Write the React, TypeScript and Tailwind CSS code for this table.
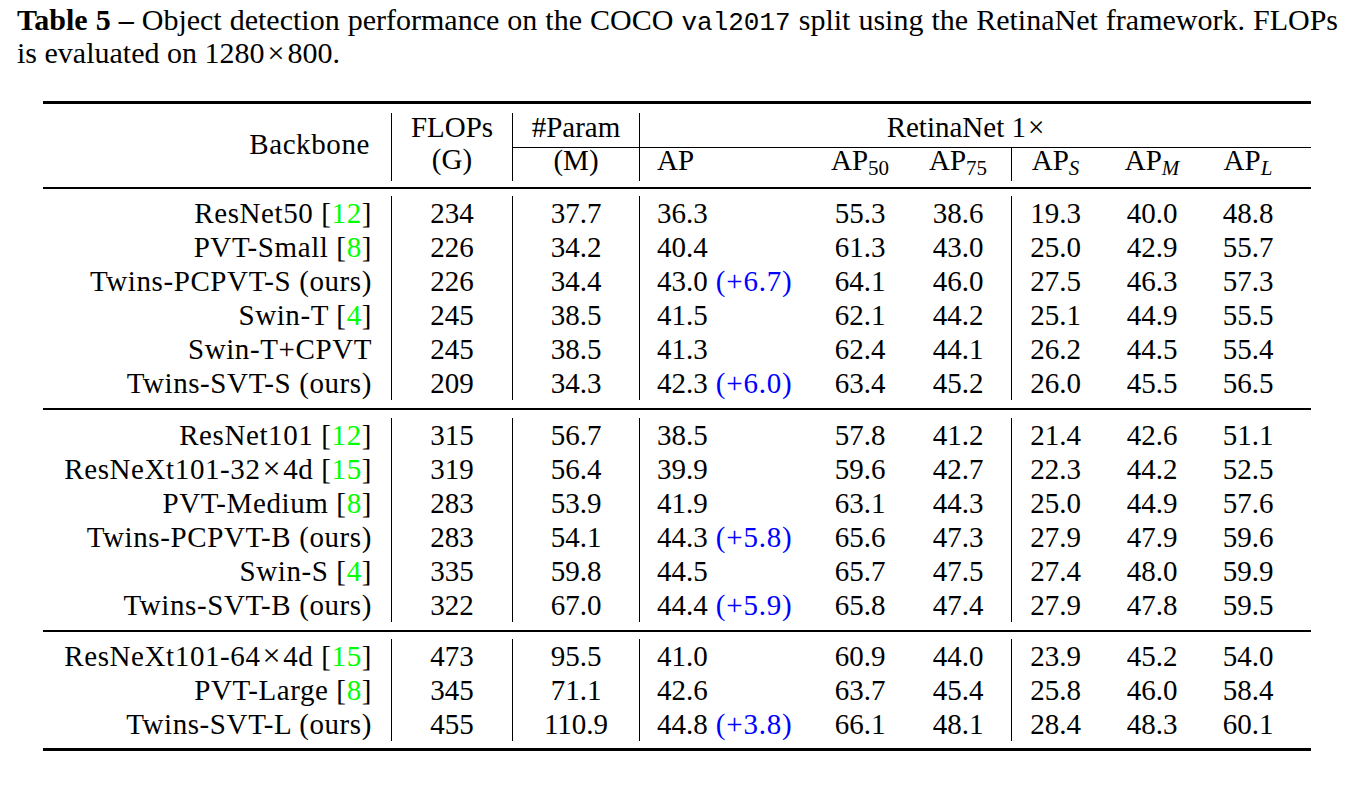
type Row = {
  name: string;
  cite?: string;
  flops: string;
  param: string;
  ap: string;
  gain?: string;
  ap50: string;
  ap75: string;
  aps: string;
  apm: string;
  apl: string;
};

const groups: Row[][] = [
  [
    { name: "ResNet50", cite: "12", flops: "234", param: "37.7", ap: "36.3", ap50: "55.3", ap75: "38.6", aps: "19.3", apm: "40.0", apl: "48.8" },
    { name: "PVT-Small", cite: "8", flops: "226", param: "34.2", ap: "40.4", ap50: "61.3", ap75: "43.0", aps: "25.0", apm: "42.9", apl: "55.7" },
    { name: "Twins-PCPVT-S (ours)", flops: "226", param: "34.4", ap: "43.0", gain: "(+6.7)", ap50: "64.1", ap75: "46.0", aps: "27.5", apm: "46.3", apl: "57.3" },
    { name: "Swin-T", cite: "4", flops: "245", param: "38.5", ap: "41.5", ap50: "62.1", ap75: "44.2", aps: "25.1", apm: "44.9", apl: "55.5" },
    { name: "Swin-T+CPVT", flops: "245", param: "38.5", ap: "41.3", ap50: "62.4", ap75: "44.1", aps: "26.2", apm: "44.5", apl: "55.4" },
    { name: "Twins-SVT-S (ours)", flops: "209", param: "34.3", ap: "42.3", gain: "(+6.0)", ap50: "63.4", ap75: "45.2", aps: "26.0", apm: "45.5", apl: "56.5" },
  ],
  [
    { name: "ResNet101", cite: "12", flops: "315", param: "56.7", ap: "38.5", ap50: "57.8", ap75: "41.2", aps: "21.4", apm: "42.6", apl: "51.1" },
    { name: "ResNeXt101-32×4d", cite: "15", flops: "319", param: "56.4", ap: "39.9", ap50: "59.6", ap75: "42.7", aps: "22.3", apm: "44.2", apl: "52.5" },
    { name: "PVT-Medium", cite: "8", flops: "283", param: "53.9", ap: "41.9", ap50: "63.1", ap75: "44.3", aps: "25.0", apm: "44.9", apl: "57.6" },
    { name: "Twins-PCPVT-B (ours)", flops: "283", param: "54.1", ap: "44.3", gain: "(+5.8)", ap50: "65.6", ap75: "47.3", aps: "27.9", apm: "47.9", apl: "59.6" },
    { name: "Swin-S", cite: "4", flops: "335", param: "59.8", ap: "44.5", ap50: "65.7", ap75: "47.5", aps: "27.4", apm: "48.0", apl: "59.9" },
    { name: "Twins-SVT-B (ours)", flops: "322", param: "67.0", ap: "44.4", gain: "(+5.9)", ap50: "65.8", ap75: "47.4", aps: "27.9", apm: "47.8", apl: "59.5" },
  ],
  [
    { name: "ResNeXt101-64×4d", cite: "15", flops: "473", param: "95.5", ap: "41.0", ap50: "60.9", ap75: "44.0", aps: "23.9", apm: "45.2", apl: "54.0" },
    { name: "PVT-Large", cite: "8", flops: "345", param: "71.1", ap: "42.6", ap50: "63.7", ap75: "45.4", aps: "25.8", apm: "46.0", apl: "58.4" },
    { name: "Twins-SVT-L (ours)", flops: "455", param: "110.9", ap: "44.8", gain: "(+3.8)", ap50: "66.1", ap75: "48.1", aps: "28.4", apm: "48.3", apl: "60.1" },
  ],
];

const cols = "grid grid-cols-[348px_121px_127px_176px_90px_106px_88px_106px_86px_20px]";

// splits "32×4d" so the times sign gets math spacing
function Name({ text }: { text: string }) {
  const parts = text.split("×");
  if (parts.length === 1) return <>{text}</>;
  return (
    <>
      {parts[0]}
      <span className="mx-[2px] text-[32px] leading-none">×</span>
      {parts[1]}
    </>
  );
}

function DataRow({ r }: { r: Row }) {
  return (
    <>
      <div className="h-[34px] pr-[19px] text-right whitespace-nowrap tracking-[0.6px]">
        <Name text={r.name} />
        {r.cite && (
          <>
            {" "}[<span className="text-[#00ff00]">{r.cite}</span>]
          </>
        )}
      </div>
      <div className="h-[34px] border-l border-black text-center">{r.flops}</div>
      <div className="h-[34px] border-l border-black text-center">{r.param}</div>
      <div className="h-[34px] border-l border-black pl-[17px] whitespace-nowrap">
        {r.ap}
        {r.gain && <span className="text-[#0000ff] tracking-[0.8px]"> {r.gain}</span>}
      </div>
      <div className="h-[34px] text-center">{r.ap50}</div>
      <div className="h-[34px] text-center">{r.ap75}</div>
      <div className="h-[34px] border-l border-black text-center">{r.aps}</div>
      <div className="h-[34px] text-center">{r.apm}</div>
      <div className="h-[34px] text-center">{r.apl}</div>
      <div className="h-[34px]" />
    </>
  );
}

function Sub({ children, italic }: { children: string; italic?: boolean }) {
  return <sub className={italic ? "text-[21px] italic" : "text-[21px]"}>{children}</sub>;
}

export default function App() {
  return (
    <div className="min-h-screen w-[1354px] bg-white text-black font-['Liberation_Serif',serif]">
      <div className="pl-[17px] pt-[3px] w-[1338px] h-[72px] text-[30px] leading-[33px]">
        <div className="h-[33px] text-justify [text-align-last:justify]">
          <span className="font-bold">Table 5 –</span> Object detection performance on the COCO{" "}
          <span className="font-['Liberation_Mono',monospace] text-[26px] leading-none">val2017</span> split using
          the RetinaNet framework. FLOPs
        </div>
        <div className="h-[33px]">
          is evaluated on 1280<span className="mx-[3px]">×</span>800.
        </div>
      </div>

      <div className="ml-[43px] mt-[29px] w-[1268px] text-[29px] leading-[34px]">
        <div className="h-[3px] bg-black" />

        {/* header */}
        <div className={`${cols} mt-[9px]`}>
          <div className="row-span-2 pr-[21px] pt-[17px] text-right leading-[28px] tracking-[0.6px]">Backbone</div>
          <div className="h-[34px] border-l border-black text-center leading-[28px]">FLOPs</div>
          <div className="h-[34px] border-l border-black text-center leading-[28px]">#Param</div>
          <div className="col-span-6 h-[34px] border-l border-black text-center leading-[28px]">
            RetinaNet 1<span className="ml-[2px]">×</span>
          </div>
          <div className="h-[34px]" />

          <div className="h-[34px] border-l border-black text-center leading-[24px]">(G)</div>
          <div className="h-[34px] border-l border-t border-black text-center leading-[24px]">(M)</div>
          <div className="h-[34px] border-l border-t border-black pl-[17px] leading-[24px]">AP</div>
          <div className="h-[34px] border-t border-black text-center leading-[24px]">
            AP<Sub>50</Sub>
          </div>
          <div className="h-[34px] border-t border-black text-center leading-[24px]">
            AP<Sub>75</Sub>
          </div>
          <div className="h-[34px] border-l border-t border-black text-center leading-[24px]">
            AP<Sub italic>S</Sub>
          </div>
          <div className="h-[34px] border-t border-black text-center leading-[24px]">
            AP<Sub italic>M</Sub>
          </div>
          <div className="h-[34px] border-t border-black text-center leading-[24px]">
            AP<Sub italic>L</Sub>
          </div>
          <div className="h-[34px] border-t border-black" />
        </div>

        <div className="mt-[6px] h-[2px] bg-black" />

        {groups.map((g, gi) => (
          <div key={gi}>
            <div className={`${cols} ${gi === 1 ? "mt-[8px]" : "mt-[7px]"}`}>
              {g.map((r) => (
                <DataRow key={r.name} r={r} />
              ))}
            </div>
            {gi < groups.length - 1 ? (
              <div className="mt-[8px] h-[2px] bg-black" />
            ) : (
              <div className="mt-[7px] h-[3px] bg-black" />
            )}
          </div>
        ))}
      </div>
    </div>
  );
}
